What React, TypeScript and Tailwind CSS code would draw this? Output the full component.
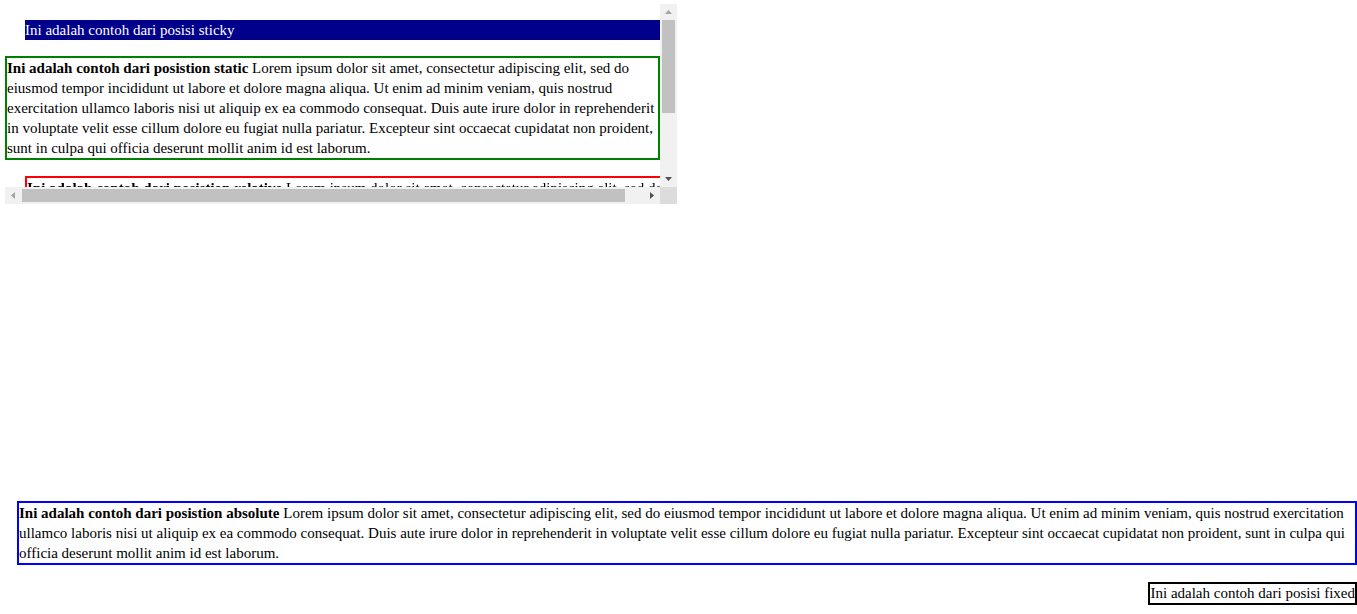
import React from "react";

const lorem =
  "Lorem ipsum dolor sit amet, consectetur adipiscing elit, sed do eiusmod tempor incididunt ut labore et dolore magna aliqua. Ut enim ad minim veniam, quis nostrud exercitation ullamco laboris nisi ut aliquip ex ea commodo consequat. Duis aute irure dolor in reprehenderit in voluptate velit esse cillum dolore eu fugiat nulla pariatur. Excepteur sint occaecat cupidatat non proident, sunt in culpa qui officia deserunt mollit anim id est laborum.";

const Arrow: React.FC<{ dir: "up" | "down" | "left" | "right"; dim?: boolean }> = ({ dir, dim }) => {
  const fill = dim ? "#a3a3a3" : "#505050";
  const pts = {
    up: "0,4 7,4 3.5,0",
    down: "0,0 7,0 3.5,4",
    left: "4,0 4,7 0,3.5",
    right: "0,0 0,7 4,3.5",
  }[dir];
  const vertical = dir === "up" || dir === "down";
  return (
    <svg width={vertical ? 7 : 4} height={vertical ? 4 : 7} viewBox={vertical ? "0 0 7 4" : "0 0 4 7"}>
      <polygon points={pts} fill={fill} />
    </svg>
  );
};

const App: React.FC = () => {
  return (
    <div className="min-h-[614px] bg-white text-black font-['Liberation_Serif','Times_New_Roman',serif] text-[15px] leading-5">
      {/* scroll demo box */}
      <div className="pl-[5px] pt-[4px]">
        <div className="w-[672px] h-[200px] flex flex-col">
          <div className="flex h-[183px]">
            <div className="w-[655px] overflow-hidden">
              <div className="sticky top-0 ml-5 mt-4 bg-[#00008b] text-white">
                Ini adalah contoh dari posisi sticky
              </div>

              {/* Static */}
              <div className="mt-4 border-2 border-[#008000]">
                <b>Ini adalah contoh dari posistion static</b> {lorem}
              </div>

              {/* Relative */}
              <div className="relative left-5 mt-4 border-2 border-[#ff0000]">
                <b>Ini adalah contoh dari posistion relative</b> {lorem}
              </div>
            </div>

            {/* vertical scrollbar */}
            <div className="w-[17px] bg-[#f1f1f1] flex flex-col">
              <div className="h-4 flex items-center justify-center">
                <Arrow dir="up" dim />
              </div>
              <div className="mx-[2px] h-[93px] bg-[#c1c1c1]" />
              <div className="flex-1" />
              <div className="h-4 flex items-center justify-center">
                <Arrow dir="down" />
              </div>
            </div>
          </div>

          {/* horizontal scrollbar */}
          <div className="flex h-[17px]">
            <div className="w-[655px] bg-[#f1f1f1] flex items-center">
              <div className="w-4 flex justify-center">
                <Arrow dir="left" dim />
              </div>
              <div className="ml-[1px] w-[603px] h-[13px] bg-[#c1c1c1]" />
              <div className="flex-1" />
              <div className="w-4 flex justify-center">
                <Arrow dir="right" />
              </div>
            </div>
            <div className="w-[17px] bg-[#dcdcdc]" />
          </div>
        </div>
      </div>

      {/* Absolute */}
      <div className="ml-[17px] mt-[297px] border-2 border-[#0000ff]">
        <b>Ini adalah contoh dari posistion absolute</b> {lorem}
      </div>

      {/* Fixed */}
      <div className="flex justify-end mt-[17px]">
        <div className="border-2 border-black leading-[19px]">
          Ini adalah contoh dari posisi fixed
        </div>
      </div>
    </div>
  );
};

export default App;
